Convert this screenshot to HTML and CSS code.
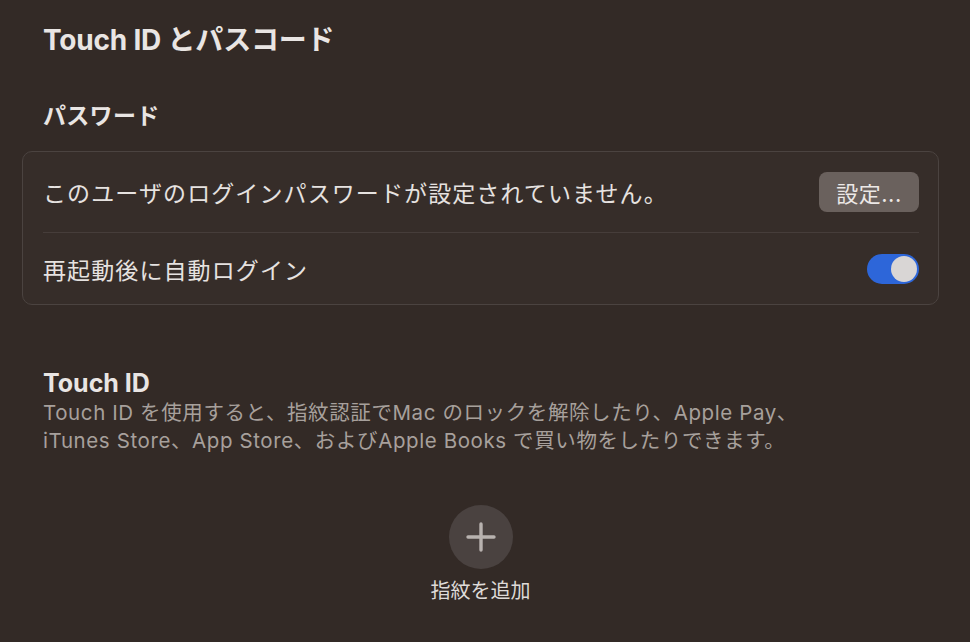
FILE: index.html
```html
<!DOCTYPE html>
<html lang="ja">
<head>
    <meta charset="UTF-8">
    <meta name="viewport" content="width=device-width, initial-scale=1.0">
    <title>Touch ID とパスコード</title>
    <link rel="stylesheet" href="styles.css">
</head>
<body>
    <div class="page">
        <h1 class="title">Touch ID とパスコード</h1>

        <h2 class="section-title">パスワード</h2>
        <div class="card">
            <div class="row">
                <span>このユーザのログインパスワードが設定されていません。</span>
                <button class="btn">設定...</button>
            </div>
            <div class="row">
                <span>再起動後に自動ログイン</span>
                <div class="toggle on"><div class="knob"></div></div>
            </div>
        </div>

        <div class="touch">
            <h2 class="touch-title">Touch ID</h2>
            <p class="desc">Touch ID を使用すると、指紋認証でMac のロックを解除したり、Apple Pay、<br>iTunes Store、App Store、およびApple Books で買い物をしたりできます。</p>
        </div>

        <div class="add">
            <div class="add-circle">
                <svg width="30" height="30" viewBox="0 0 30 30">
                    <path d="M15 2 V28 M2 15 H28" stroke="#b8b2af" stroke-width="3.4" stroke-linecap="round" fill="none"/>
                </svg>
            </div>
            <span class="add-label">指紋を追加</span>
        </div>
    </div>
</body>
</html>
```

FILE: styles.css
```css
body {
    margin: 0;
    background-color: #332a26;
    color: #e9e5e3;
    font-family: Inter, "Noto Sans CJK JP", sans-serif;
}
.page {
    padding: 20px 31px 0 22px;
}
.title {
    margin: 0 0 0 21px;
    font-size: 28px;
    font-weight: 700;
    line-height: 40px;
    letter-spacing: -0.2px;
}
.section-title {
    margin: 41px 0 0 21px;
    font-size: 23px;
    font-weight: 700;
    line-height: 30px;
    letter-spacing: 0.3px;
}
.card {
    margin-top: 20px;
    background: #362d29;
    border: 1px solid #4b4340;
    border-radius: 10px;
    padding: 0 19px 0 20px;
}
.row {
    display: flex;
    align-items: center;
    justify-content: space-between;
    font-size: 23px;
    letter-spacing: 1.1px;
    color: #e6e2e0;
}
.row:first-child {
    height: 80px;
    border-bottom: 1px solid #463d3a;
}
.row:last-child {
    height: 71px;
}
.btn {
    background: #6a615d;
    color: #ece8e6;
    border: none;
    border-radius: 8px;
    width: 100px;
    height: 40px;
    font-family: inherit;
    font-size: 22px;
    letter-spacing: 0.5px;
    padding: 0;
}
.toggle {
    width: 52px;
    height: 30px;
    border-radius: 15px;
    background: #2d66d9;
    box-sizing: border-box;
    padding: 2px;
    display: flex;
    justify-content: flex-end;
}
.knob {
    width: 26px;
    height: 26px;
    border-radius: 50%;
    background: #d9d6d5;
}
.touch {
    margin: 62px 0 0 21px;
}
.touch-title {
    margin: 0;
    font-size: 25px;
    font-weight: 700;
    line-height: 32px;
}
.desc {
    margin: 0;
    font-size: 20.5px;
    line-height: 28px;
    letter-spacing: 0.6px;
    color: #a7a09c;
}
.add {
    display: flex;
    flex-direction: column;
    align-items: center;
    margin-top: 50px;
}
.add-circle {
    width: 64px;
    height: 64px;
    border-radius: 50%;
    background: #4a4240;
    display: flex;
    align-items: center;
    justify-content: center;
}
.add-label {
    margin-top: 6px;
    font-size: 20px;
    color: #dedad8;
}
```
